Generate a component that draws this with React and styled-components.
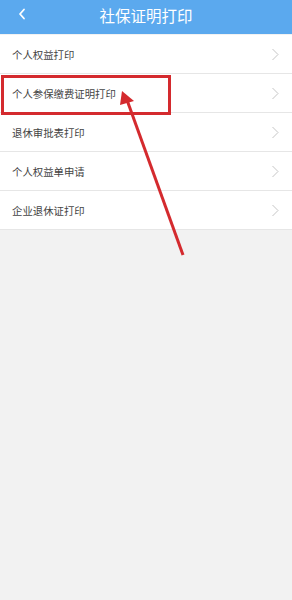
import React from "react";
import styled, { createGlobalStyle } from "styled-components";

const Global = createGlobalStyle`
  html, body { margin: 0; padding: 0; background: #f2f2f2; }
  body { font-family: "Noto Sans CJK SC", "Noto Sans", sans-serif; }
`;

const Page = styled.div`
  position: relative;
  width: 292px;
  min-height: 600px;
  background: #f2f2f2;
`;

const Header = styled.div`
  height: 34px;
  background: #5ba9ee;
  display: grid;
  grid-template-columns: 40px 1fr 40px;
  align-items: center;
  margin-bottom: 1px;
`;

const Back = styled.div`
  display: flex;
  align-items: center;
  justify-content: center;
  padding-left: 4px;
  margin-top: -6px;
`;

const Title = styled.div`
  color: #fff;
  font-size: 15.5px;
  text-align: center;
  margin-top: -4px;
`;

const List = styled.div`
  background: #fff;
`;

const Row = styled.div`
  height: 38px;
  border-bottom: 1px solid #e6e6e6;
  display: flex;
  align-items: center;
  justify-content: space-between;
  padding: 1px 12px 0 12px;
  box-sizing: border-box;
  height: 39px;
`;

const Label = styled.span`
  font-size: 10.4px;
  color: #444;
`;

const Highlight = styled.div`
  position: absolute;
  left: 1px;
  top: 75px;
  width: 164px;
  height: 34px;
  border: 3px solid #d42a2e;
`;

const Overlay = styled.svg`
  position: absolute;
  left: 0;
  top: 0;
  pointer-events: none;
`;

const Chevron = () => (
  <svg width="9" height="13" viewBox="0 0 9 13">
    <path d="M1.5 1 L7 6.5 L1.5 12" fill="none" stroke="#c6c6c6" strokeWidth="1" />
  </svg>
);

const items = [
  "个人权益打印",
  "个人参保缴费证明打印",
  "退休审批表打印",
  "个人权益单申请",
  "企业退休证打印",
];

export default function App() {
  return (
    <>
      <Global />
      <Page>
        <Header>
          <Back>
            <svg width="8" height="12" viewBox="0 0 8 12">
              <path d="M6 1.5 L2 6 L6 10.5" fill="none" stroke="#fff" strokeWidth="1.8" strokeLinecap="round" strokeLinejoin="round" />
            </svg>
          </Back>
          <Title>社保证明打印</Title>
          <div />
        </Header>
        <List>
          {items.map((t) => (
            <Row key={t}>
              <Label>{t}</Label>
              <Chevron />
            </Row>
          ))}
        </List>
        <Highlight />
        <Overlay width="292" height="600" viewBox="0 0 292 600">
          <line x1="183" y1="255" x2="127" y2="100" stroke="#d42a2e" strokeWidth="3" />
          <polygon points="122,91 134,101 120,105" fill="#d42a2e" />
        </Overlay>
      </Page>
    </>
  );
}
